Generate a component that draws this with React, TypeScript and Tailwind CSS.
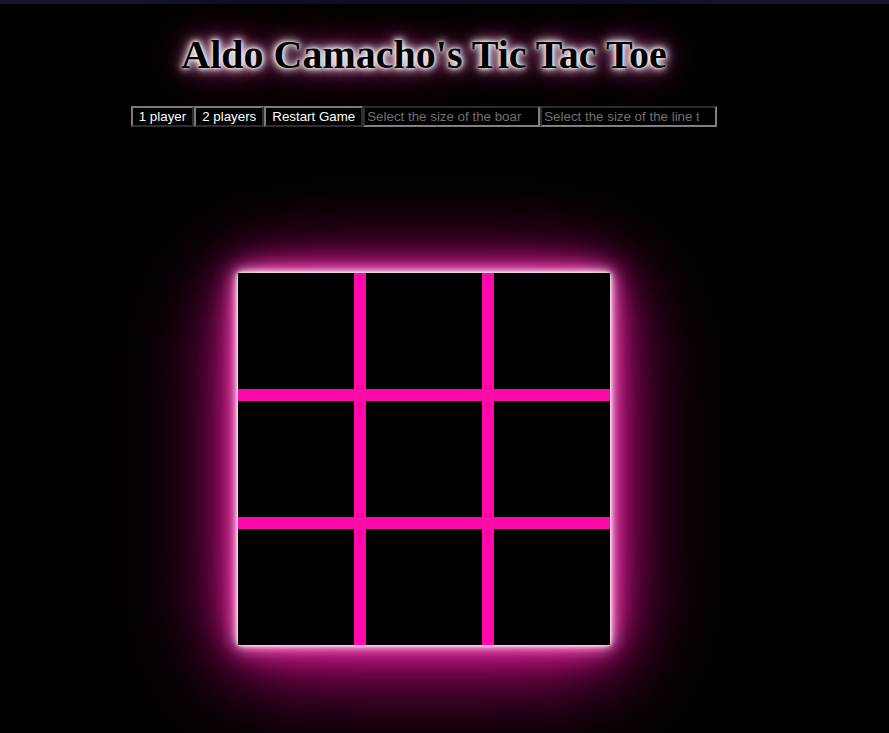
import React from 'react';

const cells = Array.from({ length: 9 }, (_, i) => i);

const btn =
  "h-[21px] px-[6px] bg-black text-white text-[13.33px] leading-[15px] border-2 border-t-[#7a7a7a] border-l-[#7a7a7a] border-b-[#2e2e2e] border-r-[#2e2e2e]";

const field =
  "h-[21px] w-[177px] pl-[2px] pr-[16px] bg-black text-white text-[13.33px] leading-[15px] placeholder:text-[#707070] outline-none border-2 border-t-[#2e2e2e] border-l-[#2e2e2e] border-b-[#7f7f7f] border-r-[#7f7f7f]";

const App = () => {
  return (
    <div className="min-h-[733px] bg-black overflow-hidden">
      <div className="h-[4px] bg-[#12162c]" />
      <div className="w-[848px] flex flex-col items-center font-['Liberation_Sans',Arial,sans-serif]">
        <h1 className="mt-[28px] text-[40px] leading-[46px] font-bold text-black font-['Liberation_Serif','Times_New_Roman',serif] [text-shadow:0_0_3px_#fff,0_0_6px_#fff,0_0_10px_#fff,0_0_16px_rgba(255,200,240,0.9),0_0_34px_rgba(220,50,160,0.8),0_0_60px_rgba(190,30,140,0.8),0_0_90px_rgba(170,20,120,0.8)]">
          Aldo Camacho's Tic Tac Toe
        </h1>

        <div className="mt-[28px] flex">
          <button className={btn}>1 player</button>
          <button className={btn}>2 players</button>
          <button className={btn}>Restart Game</button>
          <input className={field} placeholder="Select the size of the board" />
          <input className={field} placeholder="Select the size of the line to win" />
        </div>

        <div className="mt-[146px] w-[372px] h-[372px] grid grid-cols-3 gap-[12px] bg-[#ff0aa9] shadow-[0_0_3px_#fff,0_0_7px_#fff,0_0_14px_#ffc6ea,0_0_24px_#f030a8,0_0_36px_#d0208f,0_6px_64px_#c0107f,0_18px_110px_rgba(200,10,130,0.85)]">
          {cells.map((c) => (
            <div key={c} className="bg-black" />
          ))}
        </div>
      </div>
    </div>
  );
};

export default App;
